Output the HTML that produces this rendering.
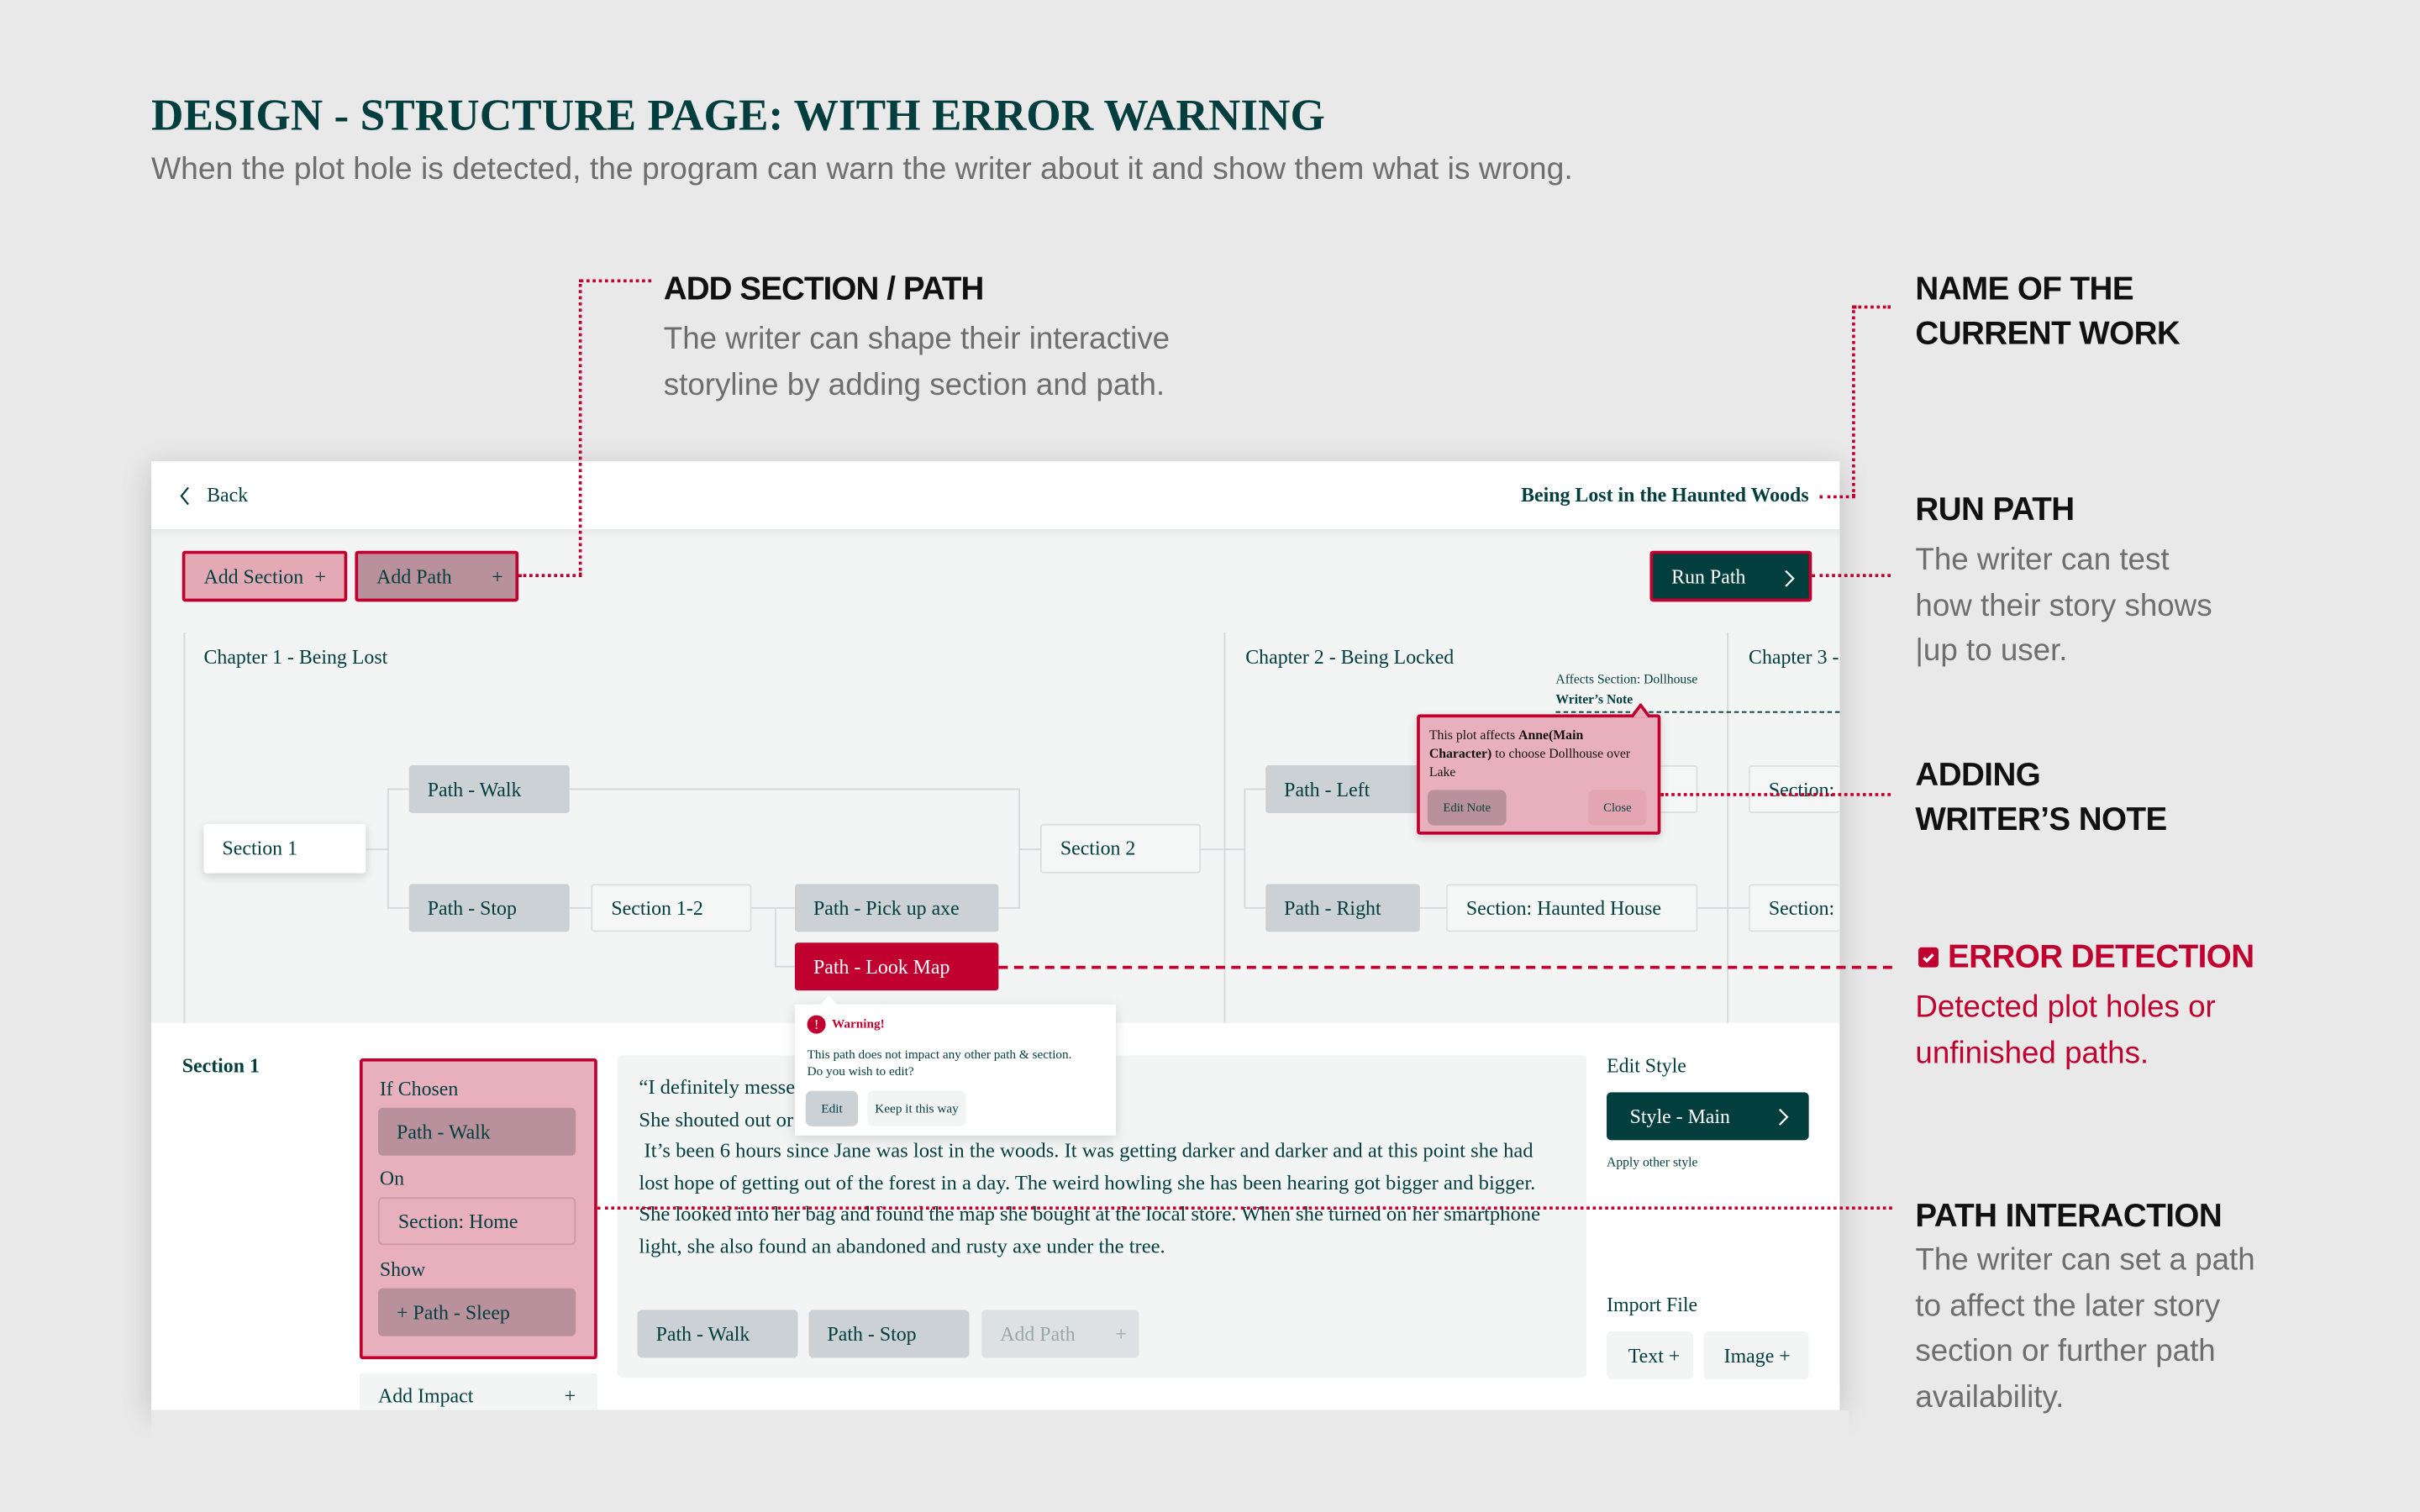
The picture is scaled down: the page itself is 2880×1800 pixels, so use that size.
<!DOCTYPE html>
<html><head><meta charset="utf-8"><style>
*{margin:0;padding:0;box-sizing:border-box}
html,body{width:2880px;height:1800px;overflow:hidden;background:#e9e9e9}
#w{position:absolute;left:0;top:0;width:1568px;height:980px;transform:scale(1.836735);transform-origin:0 0;font-family:"Liberation Serif",serif;color:#033e3e}
.a{position:absolute;white-space:nowrap}
.s{font-family:"Liberation Sans",sans-serif}
.h{font-family:"Liberation Sans",sans-serif;font-weight:bold;font-size:21px;color:#111;line-height:29px;letter-spacing:-0.3px}
.d{font-family:"Liberation Sans",sans-serif;font-size:20px;color:#6e6e6e;line-height:29.5px}
.n{position:absolute;font-size:13px;line-height:31px;padding-left:12px;border-radius:2px;white-space:nowrap}
.g{background:#cbd1d5}
.wb{background:#f5f6f6;border:1px solid #dcdfe0;line-height:29px}
.m{background:#b9919c}
.ln{position:absolute;background:#d6d9db}
.dr{position:absolute;border-top:2px dotted #c0002f;height:0}
.dv{position:absolute;border-left:2px dotted #c0002f;width:0}
</style></head><body><div id="w">
<div class="a" style="left:98px;top:59px;font-size:29px;font-weight:bold">DESIGN - STRUCTURE PAGE: WITH ERROR WARNING</div>
<div class="a s" style="left:98px;top:99px;font-size:20.3px;color:#6e6e6e">When the plot hole is detected, the program can warn the writer about it and show them what is wrong.</div>

<div class="a h" style="left:430px;top:173px;letter-spacing:-0.5px">ADD SECTION / PATH</div>
<div class="a d" style="left:430px;top:206px">The writer can shape their interactive<br>storyline by adding section and path.</div>

<div class="a h" style="left:1241px;top:173px">NAME OF THE<br>CURRENT WORK</div>
<div class="a h" style="left:1241px;top:316px">RUN PATH</div>
<div class="a d" style="left:1241px;top:349px">The writer can test<br>how their story shows<br>|up to user.</div>
<div class="a h" style="left:1241px;top:488px">ADDING<br>WRITER’S NOTE</div>
<div class="a" style="left:1243px;top:614px;width:13px;height:13px;background:#c0002f;border-radius:2px"><svg width="13" height="13" viewBox="0 0 13 13"><path d="M3.5 6.8l2 2 4-4.2" stroke="#fff" stroke-width="1.8" fill="none"/></svg></div>
<div class="a h" style="left:1262px;top:606px;color:#c0002f">ERROR DETECTION</div>
<div class="a d" style="left:1241px;top:639px;color:#c0002f">Detected plot holes or<br>unfinished paths.</div>
<div class="a h" style="left:1241px;top:774px">PATH INTERACTION</div>
<div class="a d" style="left:1241px;top:803px">The writer can set a path<br>to affect the later story<br>section or further path<br>availability.</div>

<div class="a" style="left:98px;top:299px;width:1094px;height:615px;background:#fff;box-shadow:0 4px 18px rgba(0,0,0,.18);overflow:hidden">
 <div class="a" style="left:0;top:44px;width:1094px;height:320px;background:#f3f4f4;box-shadow:inset 0 4px 6px -3px rgba(0,0,0,.08)"></div>
 <svg class="a" style="left:18px;top:16px" width="8" height="13"><path d="M6 1L1.5 6.5 6 12" stroke="#033e3e" stroke-width="1.2" fill="none"/></svg>
 <div class="a" style="left:36px;top:14px;font-size:13px">Back</div>
 <div class="a" style="right:20px;top:14px;font-size:13px;font-weight:bold">Being Lost in the Haunted Woods</div>
</div>
<div class="n" style="left:118px;top:357px;width:107px;height:33px;background:#e3aab5;border:2px solid #c0002f;line-height:29px">Add Section <span style="margin-left:4px">+</span></div>
<div class="n" style="left:230px;top:357px;width:106px;height:33px;background:#b9919c;border:2px solid #c0002f;line-height:29px">Add Path <span style="position:absolute;right:8px">+</span></div>
<div class="n" style="left:1069px;top:357px;width:105px;height:33px;background:#033e3e;border:2px solid #c0002f;color:#fff;line-height:29px">Run Path<svg style="position:absolute;right:9px;top:10px" width="7" height="12"><path d="M1 1l5 5-5 5" stroke="#fff" stroke-width="1.2" fill="none"/></svg></div>

<div class="ln" style="left:119px;top:410px;width:1px;height:253px"></div>
<div class="ln" style="left:793px;top:410px;width:1px;height:253px"></div>
<div class="ln" style="left:1119px;top:410px;width:1px;height:253px"></div>
<div class="a" style="left:132px;top:418px;font-size:13px">Chapter 1 - Being Lost</div>
<div class="a" style="left:807px;top:418px;font-size:13px">Chapter 2 - Being Locked</div>
<div class="a" style="left:1133px;top:418px;font-size:13px">Chapter 3 -</div>

<div class="ln" style="left:237px;top:550px;width:14px;height:1px"></div>
<div class="ln" style="left:251px;top:511px;width:1px;height:78px"></div>
<div class="ln" style="left:251px;top:511px;width:14px;height:1px"></div>
<div class="ln" style="left:251px;top:588px;width:14px;height:1px"></div>
<div class="ln" style="left:369px;top:511px;width:291px;height:1px"></div>
<div class="ln" style="left:660px;top:511px;width:1px;height:78px"></div>
<div class="ln" style="left:647px;top:588px;width:14px;height:1px"></div>
<div class="ln" style="left:660px;top:550px;width:14px;height:1px"></div>
<div class="ln" style="left:369px;top:588px;width:14px;height:1px"></div>
<div class="ln" style="left:487px;top:588px;width:28px;height:1px"></div>
<div class="ln" style="left:502px;top:588px;width:1px;height:39px"></div>
<div class="ln" style="left:502px;top:626px;width:13px;height:1px"></div>
<div class="ln" style="left:778px;top:550px;width:28px;height:1px"></div>
<div class="ln" style="left:806px;top:511px;width:1px;height:78px"></div>
<div class="ln" style="left:806px;top:511px;width:14px;height:1px"></div>
<div class="ln" style="left:806px;top:588px;width:14px;height:1px"></div>
<div class="ln" style="left:920px;top:588px;width:17px;height:1px"></div>
<div class="ln" style="left:1100px;top:588px;width:33px;height:1px"></div>

<div class="n" style="left:132px;top:534px;width:105px;height:32px;background:#fff;box-shadow:0 2px 6px rgba(0,0,0,.15)">Section 1</div>
<div class="n g" style="left:265px;top:496px;width:104px;height:31px">Path - Walk</div>
<div class="n g" style="left:265px;top:573px;width:104px;height:31px">Path - Stop</div>
<div class="n wb" style="left:383px;top:573px;width:104px;height:31px">Section 1-2</div>
<div class="n g" style="left:515px;top:573px;width:132px;height:31px">Path - Pick up axe</div>
<div class="n" style="left:515px;top:611px;width:132px;height:31px;background:#c0002f;color:#fff">Path - Look Map</div>
<div class="n wb" style="left:674px;top:534px;width:104px;height:32px">Section 2</div>
<div class="n g" style="left:820px;top:496px;width:104px;height:31px">Path - Left</div>
<div class="n wb" style="left:1060px;top:496px;width:40px;height:31px"></div>
<div class="n g" style="left:820px;top:573px;width:100px;height:31px">Path - Right</div>
<div class="n wb" style="left:937px;top:573px;width:163px;height:31px">Section: Haunted House</div>
<div class="n wb" style="left:1133px;top:496px;width:59px;height:31px;border-right:none">Section:</div>
<div class="n wb" style="left:1133px;top:573px;width:59px;height:31px;border-right:none">Section:</div>

<div class="a" style="left:1008px;top:435px;font-size:8.5px">Affects Section: Dollhouse</div>
<div class="a" style="left:1008px;top:448px;font-size:8.5px;font-weight:bold">Writer’s Note</div>
<div class="a" style="left:1008px;top:461px;width:184px;border-top:1px dashed #033e3e"></div>
<div class="a" style="left:918px;top:463px;width:158px;height:78px;background:#e8b0bc;border:2px solid #c0002f;border-radius:2px;box-shadow:0 2px 6px rgba(0,0,0,.15);font-size:8.6px;line-height:12px;padding:5px 6px;color:#111">This plot affects <b>Anne(Main</b><br><b>Character)</b> to choose Dollhouse over<br>Lake
 <div class="a" style="left:5px;top:47px;width:51px;height:23px;background:#b9919c;border-radius:4px;text-align:center;line-height:23px;color:#033e3e;font-size:8px">Edit Note</div>
 <div class="a" style="left:109px;top:47px;width:38px;height:23px;background:#e2a5b1;border-radius:4px;text-align:center;line-height:23px;color:#033e3e;font-size:8px">Close</div>
</div>
<svg class="a" style="left:1057px;top:456px" width="12" height="9"><path d="M0 9L6 1 12 9" fill="#e8b0bc" stroke="#c0002f" stroke-width="2"/></svg>

<div class="a" style="left:118px;top:683px;font-size:13px;font-weight:bold">Section 1</div>
<div class="a" style="left:233px;top:686px;width:154px;height:195px;background:#e8b0bc;border:2px solid #c0002f;border-radius:2px"></div>
<div class="a" style="left:246px;top:698px;font-size:13px">If Chosen</div>
<div class="n m" style="left:245px;top:718px;width:128px;height:31px;border-radius:3px">Path - Walk</div>
<div class="a" style="left:246px;top:756px;font-size:13px">On</div>
<div class="n" style="left:245px;top:776px;width:128px;height:31px;border:1px solid #cf9aa6;border-radius:3px;line-height:29px">Section: Home</div>
<div class="a" style="left:246px;top:815px;font-size:13px">Show</div>
<div class="n m" style="left:245px;top:835px;width:128px;height:31px;border-radius:3px">+ Path - Sleep</div>
<div class="n" style="left:233px;top:890px;width:154px;height:30px;background:#f3f4f4;line-height:30px">Add Impact<span style="position:absolute;right:14px">+</span></div>
<div class="a" style="left:98px;top:914px;width:1100px;height:66px;background:#e9e9e9"></div>

<div class="a" style="left:400px;top:684px;width:628px;height:209px;background:#f3f4f4;border-radius:3px"></div>
<div class="a" style="left:414px;top:695px;font-size:13.4px;line-height:20.6px;white-space:pre">“I definitely messed up
She shouted out or
 It’s been 6 hours since Jane was lost in the woods. It was getting darker and darker and at this point she had
lost hope of getting out of the forest in a day. The weird howling she has been hearing got bigger and bigger.
She looked into her bag and found the map she bought at the local store. When she turned on her smartphone
light, she also found an abandoned and rusty axe under the tree.</div>
<div class="n g" style="left:413px;top:849px;width:104px;height:31px;border-radius:3px">Path - Walk</div>
<div class="n g" style="left:524px;top:849px;width:104px;height:31px;border-radius:3px">Path - Stop</div>
<div class="n" style="left:636px;top:849px;width:102px;height:31px;background:#dde1e3;color:#9aa7a8;border-radius:3px">Add Path<span style="position:absolute;right:8px">+</span></div>

<div class="a" style="left:1041px;top:683px;font-size:13px">Edit Style</div>
<div class="n" style="left:1041px;top:708px;width:131px;height:31px;background:#033e3e;color:#fff;border-radius:3px;padding-left:15px">Style - Main<svg style="position:absolute;right:13px;top:10px" width="7" height="12"><path d="M1 1l5 5-5 5" stroke="#fff" stroke-width="1.2" fill="none"/></svg></div>
<div class="a" style="left:1041px;top:748px;font-size:8.5px">Apply other style</div>
<div class="a" style="left:1041px;top:838px;font-size:13px">Import File</div>
<div class="n" style="left:1041px;top:863px;width:56px;height:31px;background:#f3f4f4;border-radius:3px;padding-left:14px">Text +</div>
<div class="n" style="left:1104px;top:863px;width:68px;height:31px;background:#f3f4f4;border-radius:3px;padding-left:13px">Image +</div>

<div class="a" style="left:515px;top:651px;width:208px;height:85px;background:#fff;box-shadow:0 2px 8px rgba(0,0,0,.15);font-size:8.3px;color:#033e3e">
 <div class="a" style="left:8px;top:7px;width:12px;height:12px;border-radius:50%;background:#c0002f;color:#fff;text-align:center;line-height:12px;font-size:9px">!</div>
 <div class="a" style="left:24px;top:8px;color:#c0002f;font-weight:bold">Warning!</div>
 <div class="a" style="left:8px;top:27px;line-height:11px">This path does not impact any other path &amp; section.<br>Do you wish to edit?</div>
 <div class="a" style="left:7px;top:56px;width:34px;height:23px;background:#cbd1d5;border-radius:4px;text-align:center;line-height:23px">Edit</div>
 <div class="a" style="left:47px;top:56px;width:64px;height:23px;background:#f3f4f4;border-radius:4px;text-align:center;line-height:23px">Keep it this way</div>
</div>
<svg class="a" style="left:531px;top:645px" width="12" height="7"><path d="M0 7L6 0 12 7z" fill="#fff"/></svg>

<div class="dr" style="left:336px;top:372px;width:41px"></div>
<div class="dv" style="left:375px;top:181px;height:192px"></div>
<div class="dr" style="left:376px;top:181px;width:46px"></div>
<div class="dr" style="left:1179px;top:321px;width:23px"></div>
<div class="dv" style="left:1200px;top:198px;height:124px"></div>
<div class="dr" style="left:1201px;top:198px;width:24px"></div>
<div class="dr" style="left:1174px;top:372px;width:51px"></div>
<div class="dr" style="left:1076px;top:514px;width:149px"></div>
<div class="dr" style="left:647px;top:626px;width:579px;border-top-style:dashed"></div>
<div class="dr" style="left:387px;top:782px;width:839px"></div>
</div></body></html>
